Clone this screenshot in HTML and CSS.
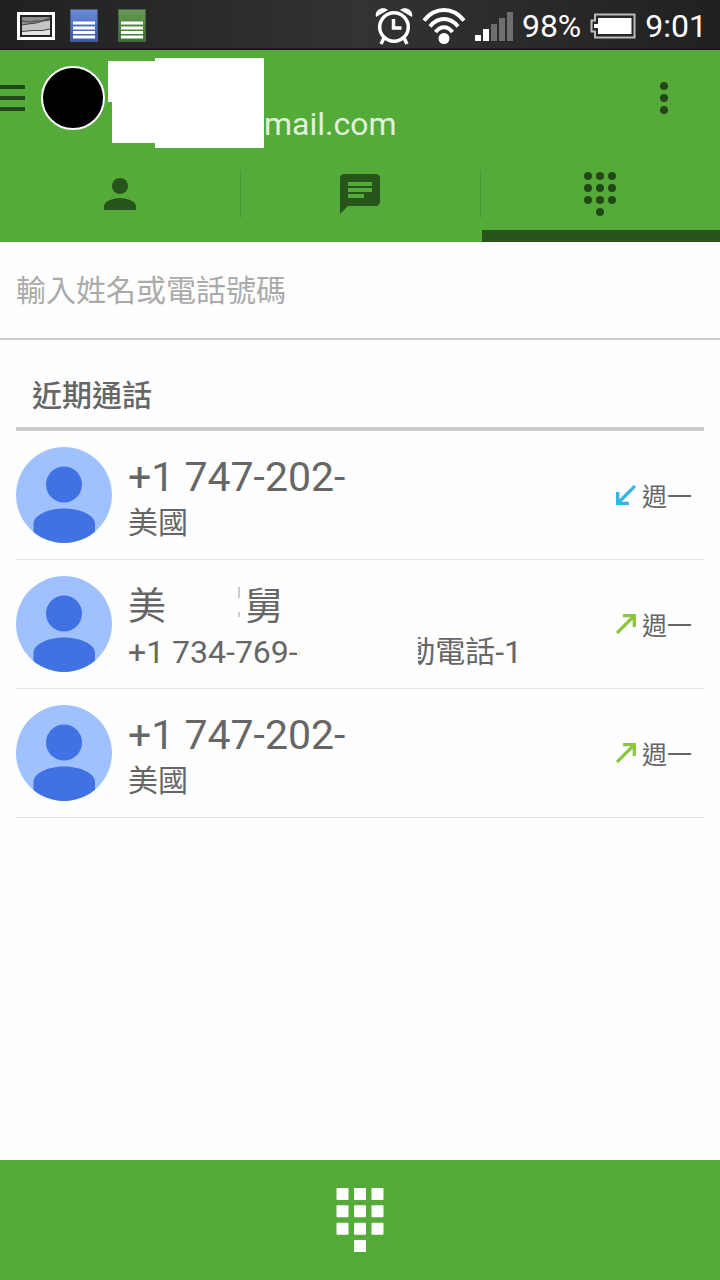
FILE: index.html
```
<!DOCTYPE html>
<html lang="zh-Hant">
<head>
    <meta charset="UTF-8">
    <meta name="viewport" content="width=device-width, initial-scale=1.0">
    <title>近期通話</title>
    <link rel="stylesheet" href="styles.css">
</head>
<body>
    <svg width="0" height="0" class="defs" aria-hidden="true">
        <symbol id="contact" viewBox="0 0 96 96">
            <clipPath id="round"><circle cx="48" cy="48" r="48"/></clipPath>
            <circle cx="48" cy="48" r="48" fill="#9fc1ff"/>
            <g clip-path="url(#round)" fill="#4072e3">
                <circle cx="48" cy="37.500" r="18"/>
                <path d="M17.500 96V77C17.500 68 32 61.500 48 61.500s31 6.500 31 15.500v19z"/>
            </g>
        </symbol>
        <symbol id="outgoing" viewBox="0 0 20 20">
            <path d="M1 19L17.500 2.500M7 1.700h11.300V13" fill="none" stroke="#8cc63f" stroke-width="3.300"/>
        </symbol>
        <symbol id="incoming" viewBox="0 0 20 20">
            <path d="M19 1L2.500 17.500M1.700 7v11.300H13" fill="none" stroke="#33b5e5" stroke-width="3.300"/>
        </symbol>
    </svg>

    <div class="status-bar">
        <div class="status-left">
            <svg width="38" height="28" viewBox="0 0 38 28">
                <rect width="38" height="28" fill="#fff"/>
                <rect x="3" y="3" width="32" height="22" fill="#222"/>
                <rect x="5" y="5" width="28" height="18" fill="#8d8d8d"/>
                <path d="M5 13l6-1 8-1 7-2 7-1v15H5z" fill="#c4c4c4"/>
                <path d="M5 20l10-1 10-1 8-1v6H5z" fill="#e2e2e2"/>
                <path d="M5 9l8 1 6-1 6 0 8-3M5 13l6-1 8-1 7-2 7-1M5 19.500l10-1 10 0 8-1.500" fill="none" stroke="#444"/>
            </svg>
            <svg width="28" height="33" viewBox="0 0 28 33">
                <defs><linearGradient id="blue" x2="0" y2="1"><stop stop-color="#6a8ad6"/><stop offset="1" stop-color="#3558bd"/></linearGradient></defs>
                <rect x=".5" y=".5" width="27" height="32" fill="url(#blue)" stroke="#4d5878"/>
                <path d="M3 14h22M3 19h22M3 23.500h22M3 28h22" stroke="#fff" stroke-width="3"/>
            </svg>
            <svg class="sheet" width="28" height="33" viewBox="0 0 28 33">
                <defs><linearGradient id="green" x2="0" y2="1"><stop stop-color="#6a9a54"/><stop offset="1" stop-color="#35752c"/></linearGradient></defs>
                <rect x=".5" y=".5" width="27" height="32" fill="url(#green)" stroke="#4d6048"/>
                <path d="M3 14h22M3 19h22M3 23.500h22M3 28h22" stroke="#fff" stroke-width="3"/>
            </svg>
        </div>
        <div class="status-right">
            <svg width="38" height="38" viewBox="0 0 38 38">
                <g fill="none" stroke="#fff" stroke-width="3.500">
                    <circle cx="19" cy="20" r="14.300"/>
                    <path d="M18.500 12v9h8M9 31l-3 6M29 31l3 6"/>
                </g>
                <path d="M1 10C-1 2 9-1 13 3zM37 10C39 2 29-1 25 3z" fill="#fff"/>
            </svg>
            <svg width="44" height="38" viewBox="0 0 44 38">
                <g fill="none" stroke="#fff" stroke-width="4">
                    <path d="M2 13.500C13-.5 31-.5 42 13.500"/>
                    <path d="M8 19.500c8-10 20-10 28 0"/>
                    <path d="M13.500 25c5-6.500 12-6.500 17 0"/>
                </g>
                <circle cx="22" cy="31.500" r="5.500" fill="#fff"/>
            </svg>
            <svg width="38" height="30" viewBox="0 0 38 30">
                <path d="M0 24h6v6H0zM8 18h6v12H8z" fill="#fff"/>
                <path d="M16 13h6v17h-6zM24 7h6v23h-6zM32 1h6v29h-6z" fill="#6e6e6e"/>
            </svg>
            <span>98%</span>
            <svg width="46" height="26" viewBox="0 0 46 26">
                <path d="M5 1.500h39.500v23H5v-6H1.500v-11H5z" fill="none" stroke="#b9bcb9" stroke-width="2"/>
                <path d="M8 5h33.500v16H8v-6H4v-4h4z" fill="#fff"/>
            </svg>
            <span>9:01</span>
        </div>
    </div>

    <header class="header">
        <div class="toolbar">
            <button class="menu-button" aria-label="選單">
                <svg width="25" height="26" viewBox="0 0 25 26"><path d="M0 2h25M0 13h25M0 24h25" stroke="#224818" stroke-width="4"/></svg>
            </button>
            <div class="account-photo"></div>
            <div class="account-mask"></div>
            <span class="account-email">mail.com</span>
            <button class="more-button" aria-label="更多選項">
                <svg width="8" height="32" viewBox="0 0 8 32" fill="#224818"><circle cx="4" cy="4" r="4"/><circle cx="4" cy="16" r="4"/><circle cx="4" cy="28" r="4"/></svg>
            </button>
        </div>
        <nav class="tabs">
            <button class="tab" aria-label="聯絡人">
                <svg width="48" height="48" viewBox="0 0 24 24"><path d="M12 12c2.210 0 4-1.790 4-4s-1.790-4-4-4-4 1.790-4 4 1.790 4 4 4zm0 2c-2.670 0-8 1.340-8 4v2h16v-2c0-2.660-5.330-4-8-4z"/></svg>
            </button>
            <button class="tab" aria-label="訊息">
                <svg width="48" height="48" viewBox="0 0 24 24"><path d="M20 2H4c-1.100 0-1.990.9-1.990 2L2 22l4-4h14c1.100 0 2-.9 2-2V4c0-1.100-.9-2-2-2zM6 9h12v2H6V9zm8 5H6v-2h8v2zm4-6H6V6h12v2z"/></svg>
            </button>
            <button class="tab active" aria-label="撥號">
                <svg width="48" height="48" viewBox="0 0 48 48">
                    <circle cx="12" cy="6" r="4"/><circle cx="24" cy="6" r="4"/><circle cx="36" cy="6" r="4"/>
                    <circle cx="12" cy="18" r="4"/><circle cx="24" cy="18" r="4"/><circle cx="36" cy="18" r="4"/>
                    <circle cx="12" cy="30" r="4"/><circle cx="24" cy="30" r="4"/><circle cx="36" cy="30" r="4"/>
                    <circle cx="24" cy="42" r="4"/>
                </svg>
            </button>
        </nav>
    </header>

    <input class="search" type="text" aria-label="輸入姓名或電話號碼" placeholder="輸入姓名或電話號碼">

    <main class="calls">
        <h2 class="section-title">近期通話</h2>
        <ul class="call-list">
            <li class="call">
                <svg class="avatar"><use href="#contact"/></svg>
                <div class="call-info">
                    <div class="call-name">+1 747-202-</div>
                    <div class="call-detail">美國</div>
                </div>
                <svg class="arrow"><use href="#incoming"/></svg>
                <span class="call-day">週一</span>
            </li>
            <li class="call">
                <svg class="avatar"><use href="#contact"/></svg>
                <div class="call-info">
                    <div class="call-name contact-name"><span>美</span><span class="speck"></span><span>舅</span></div>
                    <div class="call-detail masked">
                        <span class="number">+1 734-769-6</span>
                        <span class="label">動電話<span class="latin">-1</span></span>
                    </div>
                </div>
                <svg class="arrow"><use href="#outgoing"/></svg>
                <span class="call-day">週一</span>
            </li>
            <li class="call">
                <svg class="avatar"><use href="#contact"/></svg>
                <div class="call-info">
                    <div class="call-name">+1 747-202-</div>
                    <div class="call-detail">美國</div>
                </div>
                <svg class="arrow"><use href="#outgoing"/></svg>
                <span class="call-day">週一</span>
            </li>
        </ul>
    </main>

    <button class="dialpad-button" aria-label="開啟撥號鍵盤">
        <svg width="48" height="66" viewBox="0 0 48 66" fill="#fff">
            <rect x="0.500" y="1" width="12" height="12" rx="1"/><rect x="18" y="1" width="12" height="12" rx="1"/><rect x="35.500" y="1" width="12" height="12" rx="1"/>
            <rect x="0.500" y="18.300" width="12" height="12" rx="1"/><rect x="18" y="18.300" width="12" height="12" rx="1"/><rect x="35.500" y="18.300" width="12" height="12" rx="1"/>
            <rect x="0.500" y="35.700" width="12" height="12" rx="1"/><rect x="18" y="35.700" width="12" height="12" rx="1"/><rect x="35.500" y="35.700" width="12" height="12" rx="1"/>
            <rect x="18" y="53" width="12" height="12" rx="1"/>
        </svg>
    </button>
</body>
</html>
```
FILE: styles.css
```
* {
    box-sizing: border-box;
}
body {
    margin: 0;
    min-height: 100vh;
    display: flex;
    flex-direction: column;
    background-color: #fefefe;
    color: #666;
    font-family: Roboto, "Noto Sans CJK TC", sans-serif;
}
svg {
    display: block;
    flex-shrink: 0;
}
button {
    padding: 0;
    border: none;
    background: none;
    cursor: pointer;
}
.defs {
    position: absolute;
}

/* status bar */
.status-bar {
    display: flex;
    justify-content: space-between;
    align-items: center;
    height: 50px;
    padding: 3px 13px 0 17px;
    background: linear-gradient(to right, #202020, #333 50%, #202020);
    border-bottom: 2px solid #1a1a1a;
    color: #fff;
    font-size: 32px;
}
.status-left {
    display: flex;
    align-items: center;
    gap: 15px;
}
.sheet {
    margin-left: 5px;
}
.status-right {
    display: flex;
    align-items: center;
    gap: 9px;
}

/* header */
.header {
    background-color: #54ab3a;
}
.toolbar {
    display: flex;
    align-items: center;
    height: 96px;
    padding-right: 52px;
}
.account-photo {
    width: 64px;
    height: 64px;
    margin: 0 3px 0 16px;
    border: 2px solid #fff;
    border-radius: 50%;
    background-color: #000;
}
.account-mask {
    width: 156px;
    height: 90px;
    align-self: flex-start;
    margin-top: 8px;
    background-color: #fff;
    clip-path: polygon(0 3px, 47px 3px, 47px 0, 100% 0, 100% 100%, 47px 100%, 47px 85px, 4px 85px, 4px 44px, 0 44px);
}
.account-email {
    flex: 1;
    align-self: flex-end;
    line-height: 44px;
    font-size: 32px;
    color: #e2f1dc;
}
.tabs {
    display: flex;
    height: 96px;
}
.tab {
    position: relative;
    flex: 1;
    display: flex;
    justify-content: center;
    align-items: center;
    fill: #27541b;
}
.tab + .tab::before {
    content: "";
    position: absolute;
    left: 0;
    top: 24px;
    width: 1px;
    height: 48px;
    background-color: #489634;
}
.tab.active {
    fill: #224818;
}
.tab.active::after {
    content: "";
    position: absolute;
    left: 2px;
    right: 0;
    bottom: 0;
    height: 12px;
    background-color: #27541b;
}

/* search */
.search {
    width: 100%;
    height: 98px;
    padding: 0 16px;
    border: none;
    border-bottom: 2px solid #ccc;
    background: none;
    color: #666;
    font-family: inherit;
    font-size: 30px;
}
.search::placeholder {
    color: #aaa;
}

/* recent calls */
.calls {
    flex: 1;
    padding: 0 16px;
}
.section-title {
    margin: 0;
    padding: 34px 16px 10px;
    border-bottom: 4px solid #ccc;
    font-size: 30px;
    font-weight: 500;
    line-height: 43px;
}
.call-list {
    margin: 0;
    padding: 0;
    list-style: none;
}
.call {
    display: flex;
    align-items: center;
    padding: 16px 12px 16px 0;
    border-bottom: 1px solid #e2e2e2;
}
.avatar {
    width: 96px;
    height: 96px;
}
.call-info {
    flex: 1;
    padding: 4px 0 0 16px;
}
.call-name {
    font-size: 41px;
    line-height: 52px;
}
.contact-name {
    display: flex;
    font-size: 38px;
}
.speck {
    width: 2px;
    height: 32px;
    margin: 7px 5px 0 72px;
    background: linear-gradient(#ccc 11px, transparent 11px, transparent 25px, #ccc 25px, #ccc 30px, transparent 30px);
}
.call-detail {
    font-size: 30px;
    line-height: 40px;
}
.masked {
    display: flex;
    gap: 118px;
}
.number {
    width: 172px;
    overflow: hidden;
    white-space: nowrap;
    font-size: 32px;
}
.label {
    display: flex;
    justify-content: flex-end;
    width: 104px;
    overflow: hidden;
    white-space: nowrap;
}
.latin {
    font-size: 32px;
}
.arrow {
    width: 20px;
    height: 20px;
    margin-right: 6px;
}
.call-day {
    font-size: 25px;
}

/* bottom bar */
.dialpad-button {
    display: flex;
    justify-content: center;
    align-items: center;
    height: 120px;
    background-color: #54ab3a;
}
```
